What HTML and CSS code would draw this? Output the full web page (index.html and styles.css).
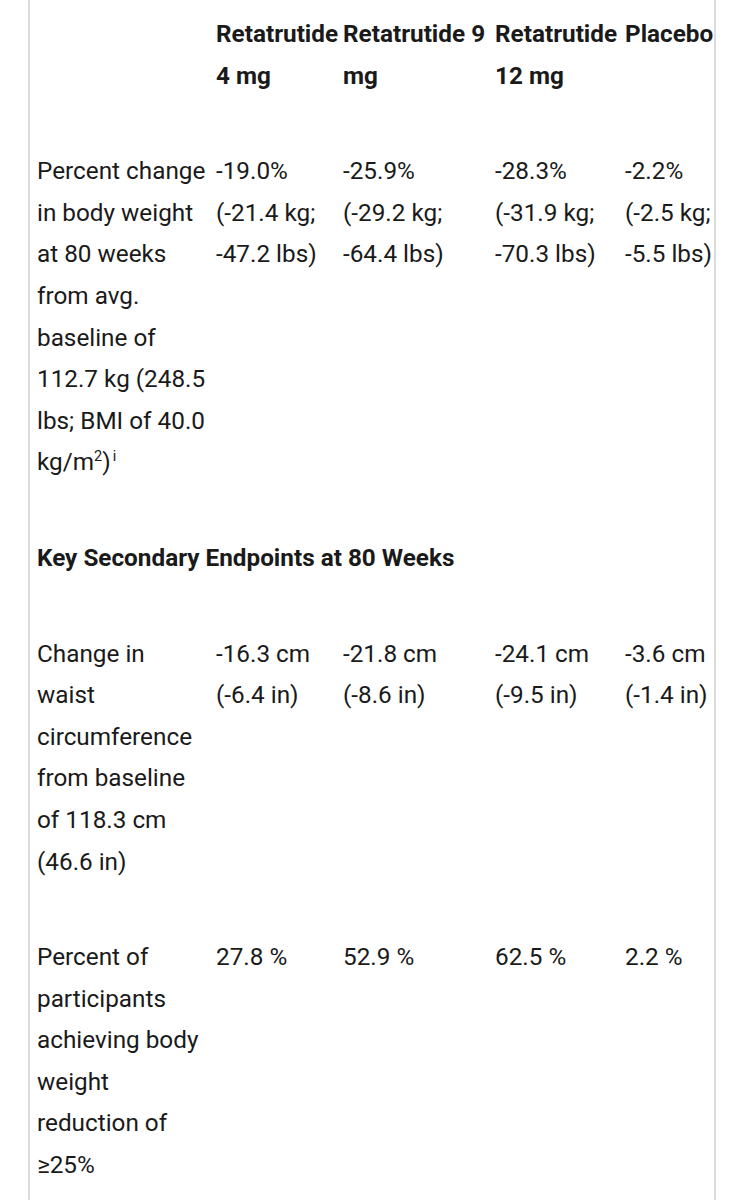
FILE: index.html
```html
<!DOCTYPE html>
<html lang="en">
<head>
<meta charset="utf-8">
<title>Retatrutide results</title>
<link rel="stylesheet" href="styles.css">
</head>
<body>
<div class="frame">
  <table class="results">
    <colgroup>
      <col class="c1"><col class="c2"><col class="c3"><col class="c4"><col class="c5">
    </colgroup>
    <thead>
      <tr>
        <th></th>
        <th>Retatrutide 4 mg</th>
        <th>Retatrutide 9 mg</th>
        <th>Retatrutide 12 mg</th>
        <th>Placebo</th>
      </tr>
    </thead>
    <tbody>
      <tr>
        <td>Percent change in body weight at 80 weeks from avg. baseline of 112.7 kg (248.5 lbs; BMI of 40.0 kg/m<sup>2</sup>)<sup class="note">i</sup></td>
        <td>-19.0%<br>(-21.4 kg;<br>-47.2 lbs)</td>
        <td>-25.9%<br>(-29.2 kg;<br>-64.4 lbs)</td>
        <td>-28.3%<br>(-31.9 kg;<br>-70.3 lbs)</td>
        <td>-2.2%<br>(-2.5 kg;<br>-5.5 lbs)</td>
      </tr>
      <tr>
        <td class="section" colspan="5">Key Secondary Endpoints at 80 Weeks</td>
      </tr>
      <tr>
        <td>Change in waist circumference from baseline of 118.3 cm (46.6 in)</td>
        <td>-16.3 cm<br>(-6.4 in)</td>
        <td>-21.8 cm<br>(-8.6 in)</td>
        <td>-24.1 cm<br>(-9.5 in)</td>
        <td>-3.6 cm<br>(-1.4 in)</td>
      </tr>
      <tr>
        <td>Percent of participants achieving body weight reduction of ≥25%</td>
        <td>27.8 %</td>
        <td>52.9 %</td>
        <td>62.5 %</td>
        <td>2.2 %</td>
      </tr>
    </tbody>
  </table>
</div>
</body>
</html>
```
FILE: styles.css
```css
html, body {
  margin: 0;
  padding: 0;
  background: #ffffff;
}
body {
  font-family: Roboto, "Liberation Sans", sans-serif;
  font-size: 24.3px;
  line-height: 41.6px;
  color: #1a1a1a;
}
.frame {
  margin-left: 28px;
  width: 688px;
  min-height: 1200px;
  border-left: 2px solid #dcdcdc;
  border-right: 2px solid #dcdcdc;
  padding: 13px 0 0 7px;
  box-sizing: border-box;
}
.results {
  border-collapse: collapse;
  table-layout: fixed;
  width: 678px;
}
.c1 { width: 179px; }
.c2 { width: 127px; }
.c3 { width: 152px; }
.c4 { width: 130px; }
.c5 { width: 90px; }
.results th,
.results td {
  text-align: left;
  vertical-align: top;
  padding: 0 6px 54px 0;
  font-weight: 400;
  white-space: normal;
}
.results td:first-child {
  padding-right: 8px;
}
.results th:last-child,
.results td:last-child {
  padding-right: 0;
  white-space: nowrap;
}
.results td.section {
  white-space: nowrap;
}
.results th,
.results .section {
  font-weight: 700;
}
.results sup {
  font-size: 0.6em;
  line-height: 0;
  vertical-align: 0.62em;
}
.results sup.note {
  margin-left: 2px;
}
```
